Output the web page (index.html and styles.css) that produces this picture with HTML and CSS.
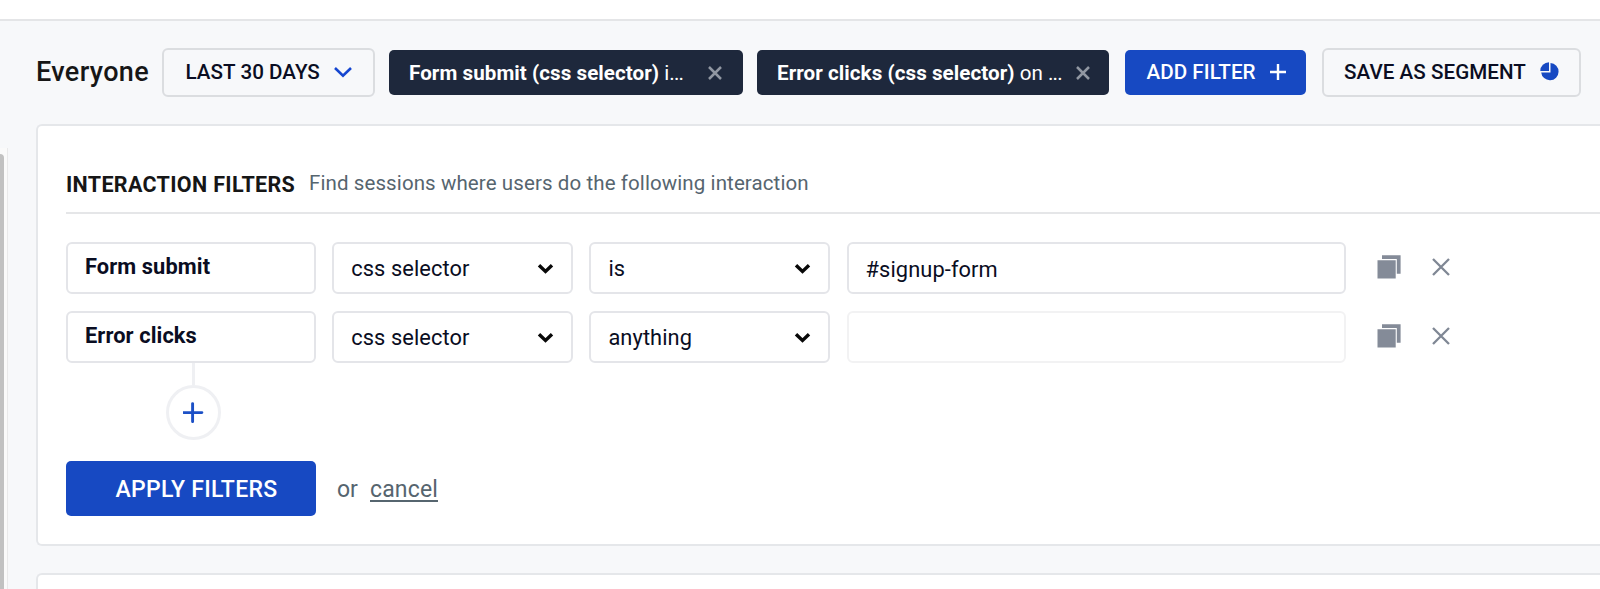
FILE: index.html
```html
<!DOCTYPE html>
<html lang="en">
<head>
<meta charset="utf-8">
<title>Session filters</title>
<link rel="stylesheet" href="styles.css">
</head>
<body>
<header class="topbar"></header>
<div class="layout">
  <aside class="scroll-track"><div class="scroll-thumb"></div></aside>
  <main class="content">
    <div class="toolbar">
      <h1 class="segment-name">Everyone</h1>
      <button class="btn btn-outline btn-date"><span class="t-date">LAST 30 DAYS</span>
        <svg width="20" height="12" viewBox="0 0 20 12"><path d="M2 2l8 7.6L18 2" fill="none" stroke="#1546d0" stroke-width="2.6"/></svg></button>
      <div class="chip chip-first"><span class="chip-text t-chip1"><b>Form submit (css selector)</b> i<i>...</i></span>
        <svg width="16" height="16" viewBox="0 0 16 16"><path d="M2 2l12 12M14 2L2 14" stroke="#9197a2" stroke-width="2.5"/></svg></div>
      <div class="chip chip-second"><span class="chip-text t-chip2"><b>Error clicks (css selector)</b> on <i>...</i></span>
        <svg width="16" height="16" viewBox="0 0 16 16"><path d="M2 2l12 12M14 2L2 14" stroke="#9197a2" stroke-width="2.5"/></svg></div>
      <button class="btn btn-add"><span class="t-add">ADD FILTER</span>
        <svg width="16" height="16" viewBox="0 0 16 16"><path d="M8 0v16M0 8h16" stroke="#fff" stroke-width="2.4"/></svg></button>
      <button class="btn btn-outline btn-save"><span class="t-save">SAVE AS SEGMENT</span>
        <svg width="19" height="19" viewBox="0 0 19 19"><path fill="#1749c2" d="M10.5.9A8.7 8.7 0 1 1 1.2 10.4H10.5z"/><path fill="#1749c2" d="M9 .3V9H.3A8.7 8.7 0 0 1 9 .3z"/></svg></button>
    </div>
    <section class="panel">
      <div class="panel-head"><h2 class="panel-title">INTERACTION FILTERS</h2><p class="panel-sub">Find sessions where users do the following interaction</p></div>
      <div class="rows">
        <div class="row">
          <div class="field name">Form submit</div>
          <div class="field select"><span>css selector</span><svg width="17" height="12" viewBox="0 0 17 12"><path d="M2 2.2l6.5 6.3L15 2.2" fill="none" stroke="#080808" stroke-width="3.4"/></svg></div>
          <div class="field select"><span>is</span><svg width="17" height="12" viewBox="0 0 17 12"><path d="M2 2.2l6.5 6.3L15 2.2" fill="none" stroke="#080808" stroke-width="3.4"/></svg></div>
          <div class="field value">#signup-form</div>
          <svg class="copy" width="24" height="24" viewBox="0 0 24 24"><path fill="#848b98" d="M.5 5.2h18.2v18.2H.5zM5 .2h18.6v18.6h-3.8V4.1H5z"/></svg>
          <svg class="remove" width="18" height="18" viewBox="0 0 18 18"><path d="M1 1l16 16M17 1L1 17" stroke="#7f8794" stroke-width="2.3"/></svg>
        </div>
        <div class="row">
          <div class="field name">Error clicks</div>
          <div class="field select"><span>css selector</span><svg width="17" height="12" viewBox="0 0 17 12"><path d="M2 2.2l6.5 6.3L15 2.2" fill="none" stroke="#080808" stroke-width="3.4"/></svg></div>
          <div class="field select"><span>anything</span><svg width="17" height="12" viewBox="0 0 17 12"><path d="M2 2.2l6.5 6.3L15 2.2" fill="none" stroke="#080808" stroke-width="3.4"/></svg></div>
          <div class="field value disabled"></div>
          <svg class="copy" width="24" height="24" viewBox="0 0 24 24"><path fill="#848b98" d="M.5 5.2h18.2v18.2H.5zM5 .2h18.6v18.6h-3.8V4.1H5z"/></svg>
          <svg class="remove" width="18" height="18" viewBox="0 0 18 18"><path d="M1 1l16 16M17 1L1 17" stroke="#7f8794" stroke-width="2.3"/></svg>
        </div>
      </div>
      <div class="add-node">
        <div class="stem"></div>
        <div class="circle"><svg width="21" height="21" viewBox="0 0 21 21"><path d="M9.6 1.6v18M.9 10.6h18" stroke="#1c50c6" stroke-width="2.9" stroke-linecap="round"/></svg></div>
      </div>
      <div class="actions"><button class="apply"><span>APPLY FILTERS</span></button><span class="or">or</span><a class="cancel">cancel</a></div>
    </section>
    <section class="panel next"></section>
  </main>
</div>
</body>
</html>
```
FILE: styles.css
```css
* { box-sizing: border-box; }
body {
  margin: 0;
  height: 589px;
  overflow: hidden;
  background: #f7f8fa;
  font-family: Roboto, "Liberation Sans", sans-serif;
  color: #0a0d22;
}
h1, h2, p { margin: 0; }
button { font: inherit; margin: 0; padding: 0; border: 0; }
svg { display: block; flex: none; }

.topbar { height: 21px; background: #fff; border-bottom: 2px solid #e4e5e7; }
.layout { display: flex; height: 568px; }
.scroll-track {
  width: 8px;
  margin-top: 127px;
  padding-top: 6px;
  background: #fafafa;
  border-right: 1px solid #e9e9ea;
  flex: none;
}
.scroll-thumb { width: 3.5px; height: 440px; background: #c1c1c1; border-top-right-radius: 4px; }
.content { width: 1592px; flex: none; padding-left: 28px; }

.toolbar { display: flex; align-items: center; height: 103px; white-space: nowrap; }
.segment-name { width: 126px; padding-bottom: 1px; font-size: 27px; line-height: 32px; font-weight: 500; letter-spacing: .35px; color: #161616; }
.btn, .chip { display: flex; align-items: center; font-size: 20.6px; line-height: 24px; border-radius: 5px; flex: none; }
.btn { font-weight: 500; color: #0a0d22; letter-spacing: .05px; }
.btn-outline { height: 49px; border: 2px solid #dbdde0; background: #f7f8fa; border-radius: 6px; padding-left: 21.5px; }
.btn-date { width: 213px; }
.btn-date span { width: 147px; text-align: left; }
.btn-date svg, .btn-save svg, .btn-add svg { margin-bottom: 2px; }
.chip { height: 45px; background: #1e283c; color: #fff; padding-left: 20px; }
.chip-first { width: 354px; margin-left: 14px; }
.chip-second { width: 352px; margin-left: 14px; }
.chip-text b { font-weight: 700; letter-spacing: .06px; }
.chip-text i { font-style: normal; letter-spacing: -.8px; }
.t-chip1 { width: 298px; text-align: left; }
.t-chip2 { width: 297.5px; text-align: left; }
.btn-add { width: 181px; height: 45px; margin-left: 16px; padding-left: 21.5px; background: #1749c2; color: #fff; }
.btn-add span { width: 123px; text-align: left; }
.btn-save { width: 259px; margin-left: 16px; padding-left: 20px; }
.btn-save span { width: 196px; text-align: left; }
.btn span { padding-bottom: 1px; }

.panel {
  height: 421.5px;
  padding: 0 0 0 28px;
  background: #fff;
  border: 2px solid #e5e7ea;
  border-right: 0;
  border-radius: 6px 0 0 6px;
}
.panel.next { height: 40px; margin-top: 27.5px; }
.panel-head { display: flex; height: 88px; padding-top: 45px; border-bottom: 2px solid #e5e6e8; align-items: flex-start; }
.panel-title { width: 243px; padding-top: 1px; font-size: 21.5px; line-height: 26px; font-weight: 700; letter-spacing: .32px; color: #161616; white-space: nowrap; }
.panel-sub { font-size: 20.5px; line-height: 24px; letter-spacing: .1px; color: #56656f; white-space: nowrap; }

.rows { display: grid; row-gap: 17px; padding-top: 28px; }
.row { display: grid; grid-template-columns: 250px 241px 241px 499px 24px 18px; column-gap: 16.2px; align-items: start; height: 52px; }
.field { height: 52px; border: 2px solid #e4e5e9; border-radius: 6px; padding: 0 17px; font-size: 21.8px; line-height: 50px; letter-spacing: .1px; white-space: nowrap; }
.field.name { font-weight: 700; line-height: 46px; }
.select { display: flex; align-items: center; justify-content: space-between; }
.select span, .select svg { margin-top: 2px; }
.value { line-height: 51px; }
.value.disabled { border-color: #f2f2f3; }
.copy { margin: 13px 0 0 15.5px; }
.remove { margin: 16px 0 0 30.5px; }

.add-node { display: flex; flex-direction: column; align-items: center; width: 254px; height: 78px; }
.stem { width: 3px; height: 22px; background: #eff0f3; }
.circle { display: flex; align-items: center; justify-content: center; width: 55px; height: 55px; border: 3px solid #eff0f3; border-radius: 50%; }

.actions { display: flex; align-items: center; margin-top: 20px; font-size: 23px; line-height: 28px; color: #56656f; }
.apply { width: 250px; height: 55px; padding: 3px 0 0 11px; border-radius: 5px; background: #1749c2; color: #fff; font-weight: 500; letter-spacing: .28px; white-space: nowrap; }
.or { margin: 3px 0 0 21px; width: 33px; }
.cancel { margin-top: 3px; letter-spacing: .15px; text-decoration: underline; text-decoration-thickness: 2px; text-underline-offset: 3px; }
```
